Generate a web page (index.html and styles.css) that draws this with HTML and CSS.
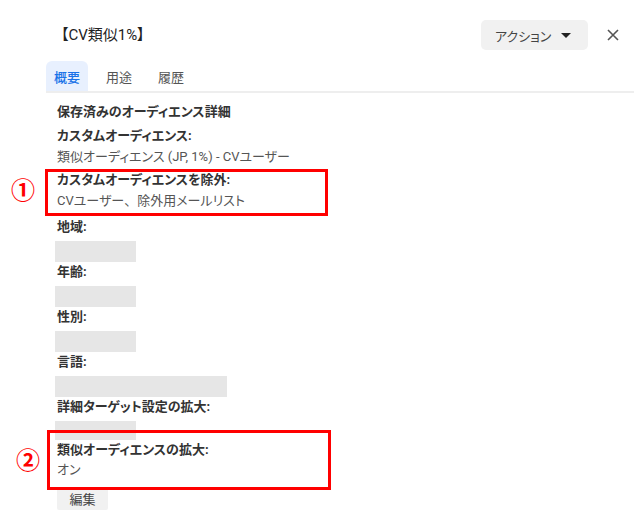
FILE: index.html
```html
<!DOCTYPE html>
<html lang="ja">
<head>
    <meta charset="UTF-8">
    <meta name="viewport" content="width=device-width, initial-scale=1.0">
    <title>CV類似1%</title>
    <link rel="stylesheet" href="styles.css">
</head>
<body>
    <div class="panel">
        <div class="panel-header">
            <h1 class="panel-title">【CV類似1%】</h1>
            <button class="action-btn">アクション <span class="caret"></span></button>
            <button class="close-btn" title="閉じる">
                <svg width="12" height="12" viewBox="0 0 12 12"><path d="M1 1 L11 11 M11 1 L1 11" stroke="#555" stroke-width="1.6" fill="none"/></svg>
            </button>
        </div>

        <div class="tabs">
            <button class="tab active">概要</button>
            <button class="tab">用途</button>
            <button class="tab">履歴</button>
        </div>

        <div class="details">
            <h2 class="details-title">保存済みのオーディエンス詳細</h2>

            <div class="field">
                <div class="field-label">カスタムオーディエンス:</div>
                <div class="field-value">類似オーディエンス (JP, 1%) - CVユーザー</div>
            </div>

            <!-- annotated ① -->
            <div class="field marked mark-one">
                <div class="field-label">カスタムオーディエンスを除外:</div>
                <div class="field-value">CVユーザー<span class="full-width">、</span>除外用メールリスト</div>
                <span class="mark-num">①</span>
            </div>

            <div class="field gap">
                <div class="field-label">地域:</div>
                <div class="redacted"></div>
            </div>
            <div class="field">
                <div class="field-label">年齢:</div>
                <div class="redacted"></div>
            </div>
            <div class="field">
                <div class="field-label">性別:</div>
                <div class="redacted"></div>
            </div>
            <div class="field">
                <div class="field-label">言語:</div>
                <div class="redacted wide"></div>
            </div>
            <div class="field">
                <div class="field-label">詳細ターゲット設定の拡大:</div>
                <div class="redacted short"></div>
            </div>

            <!-- annotated ② -->
            <div class="field marked mark-two">
                <div class="field-label">類似オーディエンスの拡大:</div>
                <div class="field-value">オン</div>
                <span class="mark-num">②</span>
            </div>

            <button class="edit-btn">編集</button>
        </div>
    </div>
</body>
</html>
```

FILE: styles.css
```css
/* Reset and Base Styles */
* {
    margin: 0;
    padding: 0;
    box-sizing: border-box;
}

body {
    font-family: Roboto, "Noto Sans CJK JP", sans-serif;
    font-feature-settings: "palt";
    background-color: #ffffff;
    color: #333333;
    font-size: 13px;
}

button {
    font-family: inherit;
    font-feature-settings: inherit;
    border: none;
    background: none;
    cursor: pointer;
}

.panel {
    width: 634px;
    padding-left: 46px;
}

/* Header */
.panel-header {
    display: flex;
    align-items: center;
    padding-top: 20px;
    padding-right: 9px;
}

.panel-title {
    flex: 1;
    font-size: 15px;
    font-weight: 400;
    color: #222222;
    padding-left: 15px;
    line-height: 30px;
}

.action-btn {
    display: inline-flex;
    align-items: center;
    gap: 10px;
    height: 30px;
    width: 107px;
    padding-left: 14px;
    background-color: #f1f1f1;
    border-radius: 5px;
    font-size: 13px;
    color: #444444;
}

.caret {
    width: 0;
    height: 0;
    border-left: 5px solid transparent;
    border-right: 5px solid transparent;
    border-top: 5px solid #222222;
}

.close-btn {
    width: 24px;
    height: 24px;
    margin-left: 13px;
    display: flex;
    align-items: center;
    justify-content: center;
}

/* Tabs */
.tabs {
    display: flex;
    gap: 10px;
    margin-top: 11px;
    border-bottom: 2px solid #eeeeee;
}

.tab {
    height: 30px;
    padding: 0 8px;
    font-size: 13px;
    color: #555555;
    border-radius: 6px 6px 0 0;
}

.tab.active {
    background-color: #e8f0fe;
    color: #1a73e8;
    font-weight: 500;
}

/* Details */
.details {
    padding: 9px 0 0 11px;
}

.details-title {
    font-size: 13px;
    font-weight: 700;
    line-height: 20px;
    color: #333333;
}

.field {
    position: relative;
}

.details-title + .field {
    margin-top: 4px;
}

.field.mark-one {
    margin-top: 3px;
}

.field.gap {
    margin-top: 6px;
}

.field-label {
    font-weight: 700;
    line-height: 20px;
    color: #333333;
}

.field-value {
    line-height: 21px;
    color: #555555;
}

.full-width {
    font-feature-settings: normal;
}

.redacted {
    width: 81px;
    height: 21px;
    margin: 4px 0 0 -2px;
    background-color: #e6e6e6;
}

.redacted.wide {
    width: 172px;
}

.redacted.short {
    height: 19px;
}

/* Red annotation boxes */
.marked::after {
    content: "";
    position: absolute;
    border: 3px solid #ff0000;
    pointer-events: none;
}

.mark-one::after {
    top: -1px;
    bottom: -5px;
    left: -12px;
    width: 277px;
}

.mark-two .field-value {
    line-height: 20px;
}

.mark-two::after {
    top: -10px;
    bottom: -10px;
    left: -10px;
    width: 278px;
}

.mark-num {
    position: absolute;
    font-family: "Noto Sans CJK JP", sans-serif;
    font-size: 24px;
    font-weight: 700;
    line-height: 24px;
    color: #ff0000;
}

.mark-one .mark-num {
    left: -46px;
    top: 7px;
}

.mark-two .mark-num {
    left: -41px;
    top: 7px;
}

.edit-btn {
    margin-top: 7px;
    width: 51px;
    height: 23px;
    background-color: #f1f1f1;
    border-radius: 2px;
    font-size: 13px;
    color: #444444;
}
```
